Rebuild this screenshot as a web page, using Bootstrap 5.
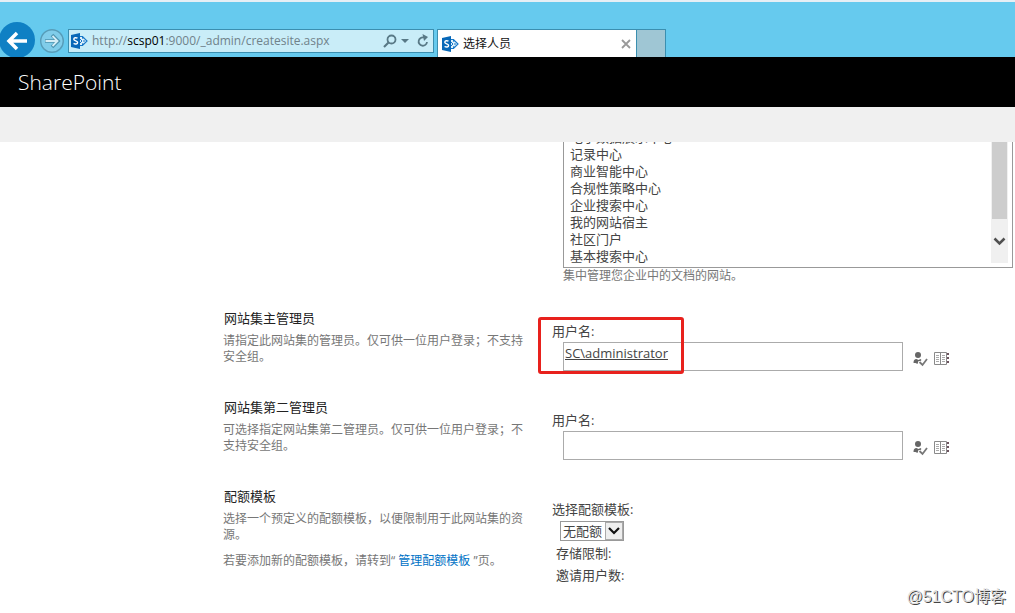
<!DOCTYPE html>
<html lang="zh-CN">
<head>
<meta charset="utf-8">
<meta name="viewport" content="width=device-width, initial-scale=1">
<title>选择人员</title>
<link rel="stylesheet" href="https://cdn.jsdelivr.net/npm/bootstrap@5.3.0/dist/css/bootstrap.min.css">
<style>
  body { font-family: "Open Sans", "Noto Sans CJK SC", sans-serif; font-size: 13px; line-height: 18px; color: #444; background: #fff; }
  .chrome-bar { background: #66caee; border-top: 2px solid #e6eff5; height: 57px; }
  .nav-round { border: 0; background: none; padding: 0; line-height: 0; }
  .address { width: 366px; height: 24px; margin-bottom: 4px; background: #c9edf8; border: 1px solid #3b8fb0; padding: 0 4px 0 2px; }
  .address .url { font-size: 12px; color: #70828a; }
  .address b { font-weight: 400; color: #000; }
  .tool-btn { border: 0; background: none; padding: 0; line-height: 0; }
  .page-tab { width: 200px; height: 28px; margin-left: 3px; background: #fff; border: 1px solid #3b8fb0; border-bottom: 0; padding: 0 5px 0 4px; font-size: 12px; color: #111; }
  .new-tab { width: 29px; height: 28px; background: #9fc6d4; border: 1px solid #3b8fb0; border-left: 0; border-bottom: 0; padding: 0; }
  .suite-bar { background: #000; height: 50px; padding-left: 18px; color: #fff; font-size: 21px; font-weight: 300; }
  .ribbon { background: #f0f0f0; height: 35px; }
  .form-grid { display: grid; grid-template-columns: 223px 300px minmax(0, 1fr); column-gap: 0; }
  .info { grid-column: 2; min-height: 89px; }
  .field { grid-column: 3; padding: 13px 0 0 29px; }
  .info h2 { font-size: 13px; line-height: 18px; font-weight: 400; color: #222; margin: 0 0 6px 1px; }
  .info p { font-size: 12px; line-height: 16px; color: #777; margin: 0 0 10px; }
  .info a { color: #0072c6; text-decoration: none; }
  .template-cell { grid-column: 3; padding: 0 2px 0 40px; min-height: 167px; }
  .list-window { height: 126px; overflow: hidden; }
  .template-list { width: 100%; flex: none; height: 159px; border: 1px solid #999; padding: 0 0 4px 4px; font-size: 13px; color: #444; background: #fff; overflow: hidden; outline: 0; border-radius: 0; }
  .template-list option { padding: 0 2px; min-height: 0; height: 17px; }
  .list-scroll { top: 0; right: 5px; width: 17px; height: 121px; background: #f0f0f0; }
  .list-thumb { height: 77px; margin: 0 1px; background: #cdcdcd; }
  .hint { font-size: 12px; line-height: 16px; color: #777; }
  .field-line { margin-top: 2px; }
  .people { width: 340px; height: 29px; margin-left: 11px; border: 1px solid #ababab; padding: 0 1px 8px; color: #444; outline: 0; text-decoration: underline; }
  .mark-frame { left: 15px; top: 8px; width: 146px; height: 57px; border: 3px solid #e8211d; border-radius: 3px; pointer-events: none; }
  .quota { width: 64px; height: 20px; margin: 3px 0 1px 8px; border: 1px solid #999; appearance: none; padding: 0 0 0 2px; font-size: 13px; line-height: 16px; color: #444; background: #fff; border-radius: 0; }
  .quota-wrap { width: 72px; }
  .quota-arrow { right: 1px; top: 4px; width: 18px; height: 18px; background: #eee; border: 1px solid #aaa; pointer-events: none; }
  .limit { line-height: 22px; margin-left: 4px; }
  .stamp { right: 9px; bottom: 6px; font-family: "Liberation Sans", "Noto Sans CJK SC", sans-serif; font-size: 16px; line-height: 20px; color: #ddd; text-shadow: 1px 1px 0 #444; }
</style>
</head>
<body>
<svg class="d-none" aria-hidden="true">
  <symbol id="sp-logo" viewBox="0 0 17 16">
    <path d="M9 3.500h2.500L16 8l-4.500 4.500H9" fill="#dff1fb" stroke="#1979c9" stroke-width="1.200"/>
    <path d="M9 6l2 2-2 2M11 3l1 3M11 13l1-3M12 8h2" fill="none" stroke="#1979c9"/>
    <path d="M0 2l9-2v16l-9-2z" fill="#0868b8"/>
    <path d="M6.500 5.200C5 4.300 2.800 4.600 2.800 6.200c0 2 3.800 1.400 3.800 3.400 0 1.600-2.400 1.800-4 .8" fill="none" stroke="#fff" stroke-width="1.400"/>
  </symbol>
  <symbol id="check-person" viewBox="0 0 17 17">
    <circle cx="7" cy="5" r="3" fill="#666"/>
    <path d="M2.500 13c0-3 1-4 3-4l2 1 2-1 1 1-1 1-2 0-1 3-2-1z" fill="#666"/>
    <path d="M8.500 12l3 3 4.500-6" fill="none" stroke="#777" stroke-width="1.800"/>
  </symbol>
  <symbol id="book" viewBox="0 0 18 17">
    <path d="M2.500 2.500h12v12h-12zM8.500 2.500v12" fill="#fff" stroke="#8a8a8a"/>
    <path d="M4 5.500h3M4 7.500h3M4 9.500h3M4 11.500h3M10 5.500h3M10 7.500h3M10 9.500h3M10 11.500h3" stroke="#aaa"/>
    <path d="M15 3h2v2h-2zM15 7h2v2h-2zM15 11h2v2h-2z" fill="#6d5560"/>
  </symbol>
</svg>

<div class="position-relative min-vh-100 overflow-hidden">
  <header class="chrome-bar d-flex align-items-end overflow-hidden">
    <button class="nav-round" type="button" aria-label="后退">
      <svg width="36" height="35" viewBox="0 0 36 35"><circle cx="17" cy="18" r="18" fill="#0f80c4"/><path d="M27 19H9M17 11l-8 8 8 8" fill="none" stroke="#fff" stroke-width="3.500"/></svg>
    </button>
    <button class="nav-round ms-1 me-1" type="button" aria-label="前进">
      <svg width="24" height="32" viewBox="0 0 24 32"><circle cx="12" cy="16" r="11.300" fill="#80cdea" stroke="#579db9" stroke-width="1.400"/><path d="M5 16h13M12 10l6 6-6 6" fill="none" stroke="#4d94b0" stroke-width="3.600"/><path d="M5.500 16h12M12.500 11l5 5-5 5" fill="none" stroke="#d4edf6" stroke-width="1.800"/></svg>
    </button>
    <div class="address d-flex align-items-center">
      <svg width="17" height="16"><use href="#sp-logo"/></svg>
      <span class="url flex-grow-1 ms-1 text-nowrap">http://<b>scsp01</b>:9000/_admin/createsite.aspx</span>
      <button class="tool-btn me-1" type="button" aria-label="搜索"><svg width="14" height="14" viewBox="0 0 14 14"><circle cx="8.500" cy="5.500" r="4" fill="none" stroke="#587986" stroke-width="1.800"/><path d="M5.500 8.500L1 13" stroke="#587986" stroke-width="2.200"/></svg></button>
      <button class="tool-btn me-2" type="button" aria-label="更多"><svg width="8" height="5" viewBox="0 0 8 5"><path d="M0 0h8L4 4z" fill="#587986"/></svg></button>
      <button class="tool-btn" type="button" aria-label="刷新"><svg width="12" height="14" viewBox="0 0 12 14"><path d="M7 3.500A4.200 4.200 0 1 0 10 8" fill="none" stroke="#587986" stroke-width="1.800"/><path d="M5.500 0l5.500 3-4 4z" fill="#587986"/></svg></button>
    </div>
    <div class="page-tab d-flex align-items-center">
      <svg width="17" height="16"><use href="#sp-logo"/></svg>
      <span class="flex-grow-1 ms-1">选择人员</span>
      <button class="tool-btn" type="button" aria-label="关闭"><svg width="10" height="10" viewBox="0 0 10 10"><path d="M1 1l8 8M9 1L1 9" stroke="#999" stroke-width="1.800"/></svg></button>
    </div>
    <button class="new-tab" type="button" aria-label="新建选项卡"></button>
  </header>

  <div class="suite-bar d-flex align-items-center">SharePoint</div>
  <div class="ribbon"></div>

  <main class="form-grid">
    <div class="template-cell">
      <div class="list-window position-relative d-flex align-items-end">
        <select class="template-list" size="9" aria-label="选择模板">
          <option>文档中心</option>
          <option>电子数据展示中心</option>
          <option>记录中心</option>
          <option>商业智能中心</option>
          <option>合规性策略中心</option>
          <option>企业搜索中心</option>
          <option>我的网站宿主</option>
          <option>社区门户</option>
          <option>基本搜索中心</option>
        </select>
        <div class="list-scroll position-absolute">
          <div class="list-thumb"></div>
          <svg class="d-block mx-auto mt-3" width="13" height="12" viewBox="0 0 13 12"><path d="M1.500 3.500l5 5 5-5" fill="none" stroke="#505050" stroke-width="2.500"/></svg>
        </div>
      </div>
      <div class="hint">集中管理您企业中的文档的网站。</div>
    </div>

    <section class="info">
      <h2>网站集主管理员</h2>
      <p>请指定此网站集的管理员。仅可供一位用户登录；不支持安全组。</p>
    </section>
    <div class="field position-relative">
      <label class="d-block" for="owner">用户名:</label>
      <div class="d-flex align-items-center field-line">
        <input class="people" id="owner" type="text" value="SC\administrator">
        <button class="tool-btn ms-2 mt-1 me-1" type="button" aria-label="检查姓名"><svg width="17" height="17"><use href="#check-person"/></svg></button>
        <button class="tool-btn mt-1" type="button" aria-label="浏览"><svg width="18" height="17"><use href="#book"/></svg></button>
      </div>
      <div class="mark-frame position-absolute"></div>
    </div>

    <section class="info">
      <h2>网站集第二管理员</h2>
      <p>可选择指定网站集第二管理员。仅可供一位用户登录；不支持安全组。</p>
    </section>
    <div class="field">
      <label class="d-block" for="second">用户名:</label>
      <div class="d-flex align-items-center field-line">
        <input class="people" id="second" type="text">
        <button class="tool-btn ms-2 mt-1 me-1" type="button" aria-label="检查姓名"><svg width="17" height="17"><use href="#check-person"/></svg></button>
        <button class="tool-btn mt-1" type="button" aria-label="浏览"><svg width="18" height="17"><use href="#book"/></svg></button>
      </div>
    </div>

    <section class="info">
      <h2>配额模板</h2>
      <p>选择一个预定义的配额模板，以便限制用于此网站集的资源。</p>
      <p>若要添加新的配额模板，请转到“ <a href="#">管理配额模板</a> ”页。</p>
    </section>
    <div class="field">
      <label class="d-block" for="quota">选择配额模板:</label>
      <div class="quota-wrap position-relative d-flex">
        <select class="quota" id="quota"><option>无配额</option></select>
        <span class="quota-arrow position-absolute d-flex align-items-center justify-content-center"><svg width="12" height="10" viewBox="0 0 12 10"><path d="M1 2l5 5 5-5" fill="none" stroke="#111" stroke-width="2.200"/></svg></span>
      </div>
      <div class="limit">存储限制:</div>
      <div class="limit">邀请用户数:</div>
    </div>
  </main>
  <div class="stamp position-absolute">@51CTO博客</div>
</div>
<script src="https://cdn.jsdelivr.net/npm/bootstrap@5.3.0/dist/js/bootstrap.bundle.min.js"></script>
</body>
</html>
